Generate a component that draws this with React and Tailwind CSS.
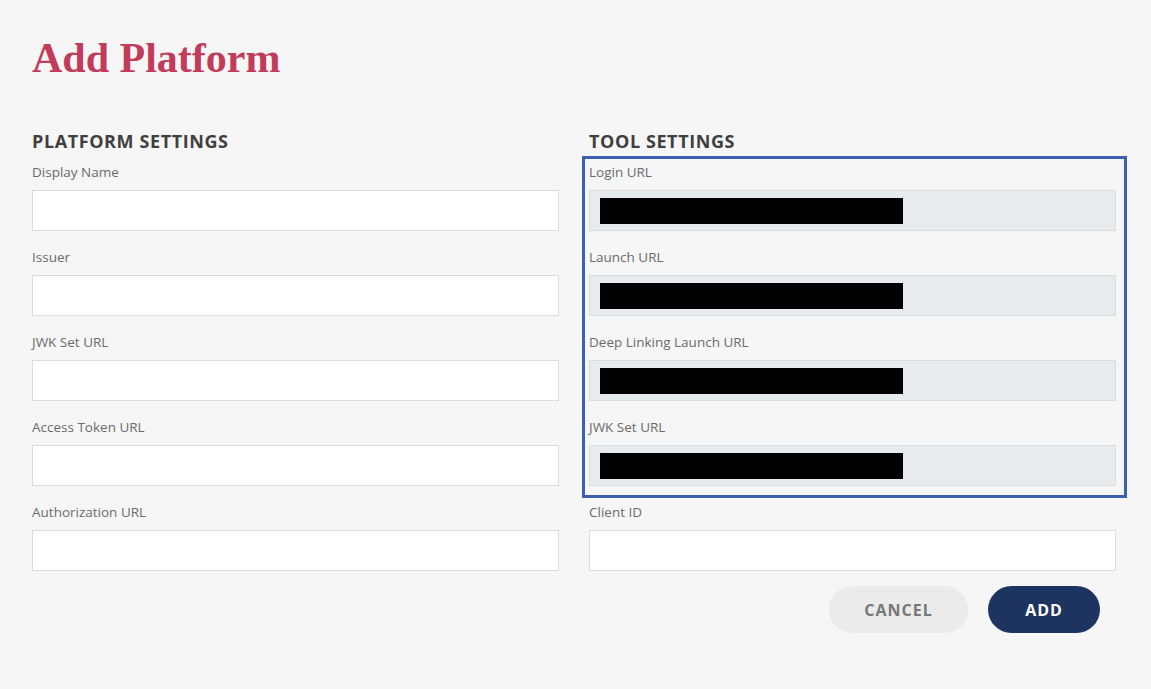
import React from 'react';

const label = 'block text-[13.5px] leading-[20px] text-[#6b6b6b] mb-[8px]';

const Field = ({ name, locked, last }) => (
  <div className={last ? '' : 'mb-[16px]'}>
    <label className={label}>{name}</label>
    {locked ? (
      <div className="h-[41px] border border-[#dcdcdc] bg-[#e8ebee] flex items-center pl-[10px]">
        <div className="h-[26px] w-[303px] bg-black" />
      </div>
    ) : (
      <input type="text" className="block w-full h-[41px] border border-[#dcdcdc] bg-white outline-none px-[10px]" />
    )}
  </div>
);

const Heading = ({ children }) => (
  <h2 className="text-[18px] leading-[24px] font-bold tracking-[0.6px] text-[#3f3f3f] mb-[9px]">{children}</h2>
);

export default function App() {
  return (
    <div className="min-h-[689px] bg-[#f6f6f6] pt-[34px] pl-[32px]" style={{ fontFamily: '"Open Sans", sans-serif' }}>
      <h1
        className="text-[42px] leading-[48px] font-bold text-[#c23b5b]"
        style={{ fontFamily: '"Liberation Serif", serif' }}
      >
        Add Platform
      </h1>

      <div className="w-[1084px] grid grid-cols-2 gap-x-[30px] mt-[47px]">
        <div>
          <Heading>PLATFORM SETTINGS</Heading>
          <Field name="Display Name" />
          <Field name="Issuer" />
          <Field name="JWK Set URL" />
          <Field name="Access Token URL" />
          <Field name="Authorization URL" last />
        </div>
        <div>
          <Heading>TOOL SETTINGS</Heading>
          <div className="relative mb-[16px]">
            <Field name="Login URL" locked />
            <Field name="Launch URL" locked />
            <Field name="Deep Linking Launch URL" locked />
            <Field name="JWK Set URL" locked last />
            <div className="absolute -left-[7px] -right-[11px] -top-[6px] -bottom-[12px] border-[3px] border-[#3b62b0] pointer-events-none" />
          </div>
          <Field name="Client ID" last />
          <div className="flex justify-end gap-[20px] mt-[15px] mr-[16px]">
            <button className="w-[139px] h-[47px] rounded-full bg-[#ebebeb] text-[#777] text-[16px] font-bold tracking-[1px]">
              CANCEL
            </button>
            <button className="w-[112px] h-[47px] rounded-full bg-[#1d3461] text-white text-[16px] font-bold tracking-[1px]">
              ADD
            </button>
          </div>
        </div>
      </div>
    </div>
  );
}
